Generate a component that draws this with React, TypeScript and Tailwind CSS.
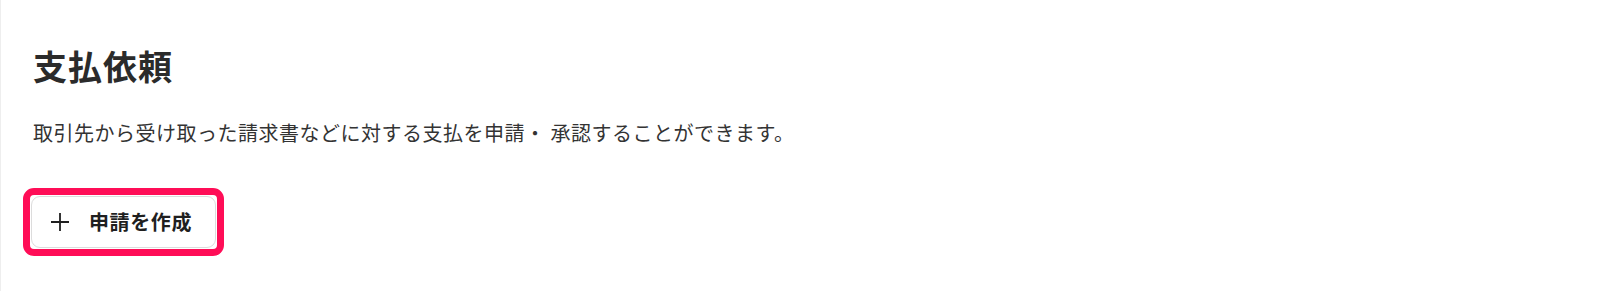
const FONT = { fontFamily: '"Noto Sans CJK JP", "Noto Sans", sans-serif' }

export default function App() {
  return (
    <div className="h-[291px] w-full border-l border-[#eeeeee] bg-white text-[#333333]" style={FONT}>
      <div className="flex flex-col items-start pl-8 pt-[42px]">
        {/* Header */}
        <h1 className="text-[34px] font-bold leading-[48px] tracking-[0.03em] text-[#2b2b2b]">支払依頼</h1>
        <p className="mt-[28px] text-[20px] leading-[30px] tracking-[0.025em] text-[#333333]">
          取引先から受け取った請求書などに対する支払を申請・ 承認することができます。
        </p>

        {/* Action, with highlight frame */}
        <div className="-ml-[10px] mt-[40px] rounded-[11px] border-[7px] border-[#ff0d57] p-[1px]">
          <button className="flex h-[52px] w-[185px] items-center rounded-[9px] border border-[#dcdcdc] bg-white pl-[19px]">
            <svg viewBox="0 0 18 18" className="h-[18px] w-[18px] text-[#1f1f1f]" fill="none" stroke="currentColor" strokeWidth={1.8}>
              <path d="M0 9h18M9 0v18" />
            </svg>
            <span className="ml-[20px] text-[20px] font-bold tracking-[0.03em] text-[#1f1f1f]">申請を作成</span>
          </button>
        </div>
      </div>
    </div>
  )
}
